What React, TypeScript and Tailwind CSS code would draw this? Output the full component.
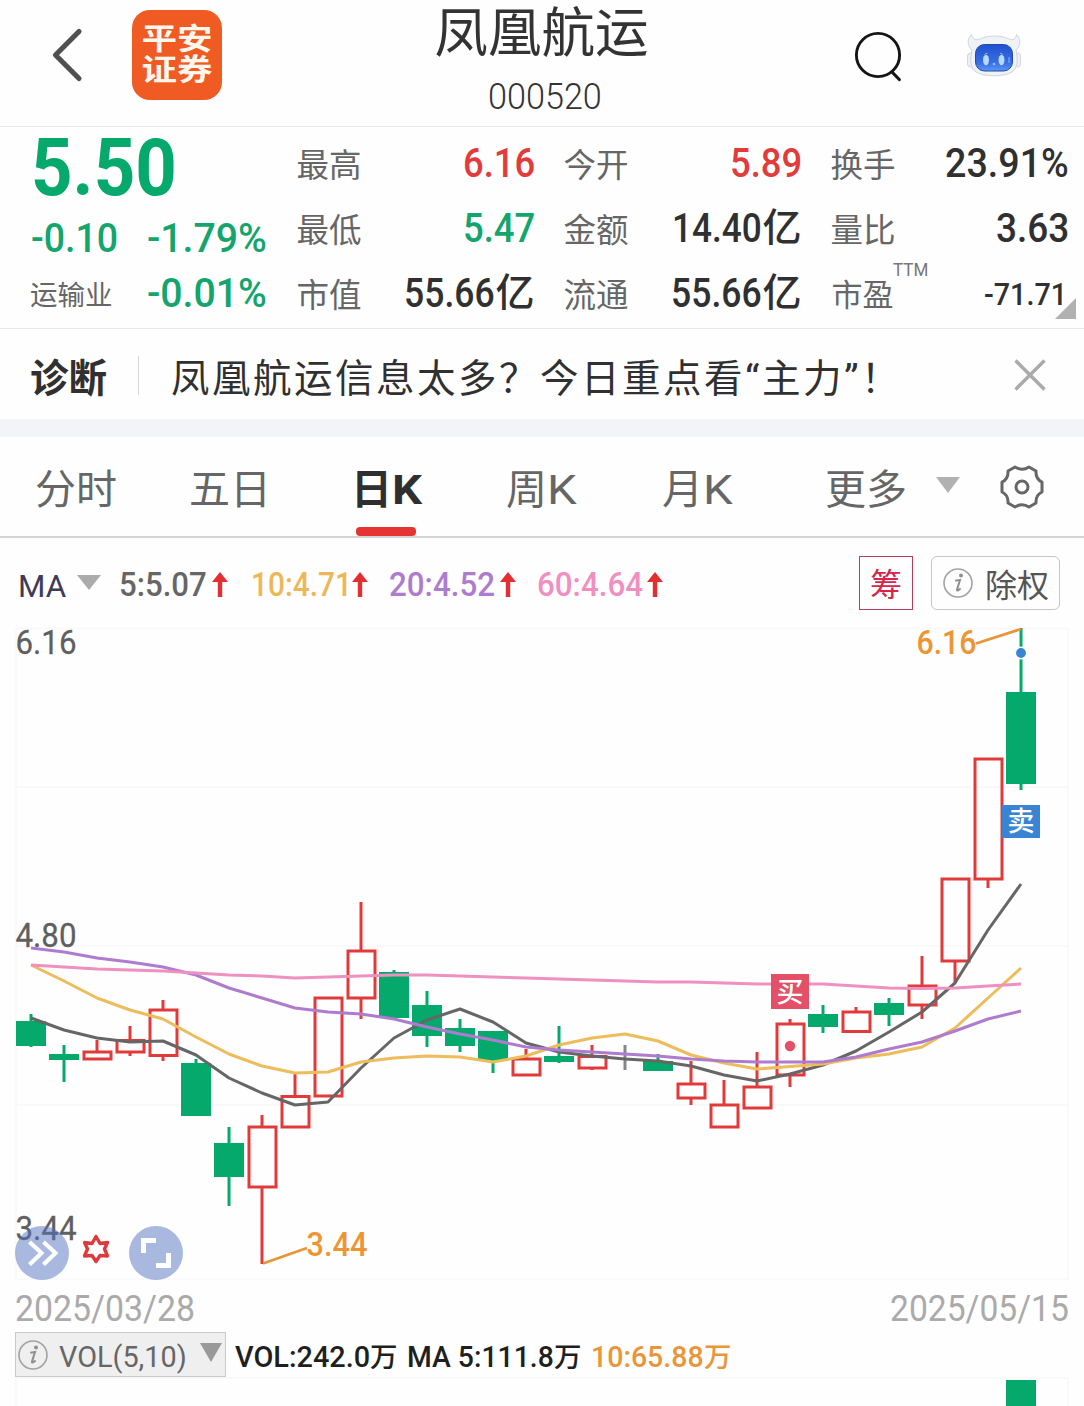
import { useLayoutEffect, useRef, useState } from 'react';
import type { ReactNode } from 'react';
import { clsx } from 'clsx';

interface FitProps {
  w: number;
  className?: string;
  children: ReactNode;
}

// Squeezes a run of latin text into a fixed width, like a narrow DIN face
function Fit({ w, className, children }: FitProps) {
  const ref = useRef<HTMLSpanElement>(null);
  const [scale, setScale] = useState(1);

  useLayoutEffect(() => {
    if (ref.current) {
      setScale(w / ref.current.offsetWidth);
    }
  }, [w, children]);

  return (
    <span className={clsx('inline-block shrink-0 whitespace-nowrap', className)} style={{ width: w }}>
      <span ref={ref} className="inline-block origin-left" style={{ transform: `scaleX(${scale})` }}>
        {children}
      </span>
    </span>
  );
}

type Tone = 'up' | 'down' | 'plain';

interface Stat {
  label: string;
  value: string;
  w: number;
  tone: Tone;
  unit?: string;
}

const toneClass: Record<Tone, string> = {
  up: 'text-[#e33b3b]',
  down: 'text-[#13a56c]',
  plain: 'text-[#303030]',
};

const stats: Stat[] = [
  { label: '最高', value: '6.16', w: 72, tone: 'up' },
  { label: '今开', value: '5.89', w: 72, tone: 'up' },
  { label: '换手', value: '23.91%', w: 124, tone: 'plain' },
  { label: '最低', value: '5.47', w: 72, tone: 'down' },
  { label: '金额', value: '14.40', w: 90, tone: 'plain', unit: '亿' },
  { label: '量比', value: '3.63', w: 73, tone: 'plain' },
  { label: '市值', value: '55.66', w: 91, tone: 'plain', unit: '亿' },
  { label: '流通', value: '55.66', w: 91, tone: 'plain', unit: '亿' },
];

type Candle = [kind: 'r' | 'g' | 'n', high: number, top: number, bottom: number, low: number];

const candles: Candle[] = [
  ['g', 1014, 1021, 1046, 1047],
  ['g', 1045, 1054, 1060, 1082],
  ['r', 1040, 1050.5, 1060.5, 1060],
  ['r', 1026, 1039, 1053.5, 1056],
  ['r', 1000, 1008.5, 1057, 1061],
  ['g', 1059, 1063, 1116, 1116],
  ['g', 1127, 1143, 1177, 1206],
  ['r', 1115, 1125.5, 1188.5, 1264],
  ['r', 1073, 1095, 1128.5, 1128],
  ['r', 997, 996.5, 1097.5, 1097],
  ['r', 902, 949.5, 999.5, 1019],
  ['g', 970, 972, 1018, 1018],
  ['g', 991, 1005, 1036, 1047],
  ['g', 1019, 1028, 1046, 1052],
  ['g', 1031, 1031, 1061, 1073],
  ['r', 1049, 1057.5, 1076.5, 1076],
  ['g', 1026, 1056, 1062, 1063],
  ['r', 1045, 1055, 1069.5, 1070],
  ['n', 1045, 1056, 1058, 1070],
  ['g', 1054, 1061, 1071, 1071],
  ['r', 1061, 1082.5, 1099.5, 1105],
  ['r', 1080, 1103.5, 1128.5, 1128],
  ['r', 1052, 1085.5, 1109.5, 1109],
  ['r', 1019, 1022.5, 1076.5, 1087],
  ['g', 1005, 1014, 1027, 1033],
  ['r', 1007, 1010.5, 1033, 1033],
  ['g', 998, 1003, 1015, 1026],
  ['r', 956, 984.5, 1006.5, 1019],
  ['r', 878, 877.5, 962.5, 982],
  ['r', 758, 757.5, 880.5, 888],
  ['g', 628, 692, 784, 790],
];

const ma5 = [1018, 1030, 1038, 1042, 1041, 1055, 1078, 1093, 1105, 1102, 1068, 1038, 1020, 1009, 1022, 1043, 1052, 1056, 1059, 1061, 1066, 1075, 1081, 1074, 1065, 1051, 1032, 1012, 983, 930, 884];
const ma10 = [965, 981, 998, 1010, 1019, 1037, 1054, 1066, 1073, 1072, 1062, 1058, 1056, 1057, 1062, 1056, 1045, 1038, 1034, 1041, 1055, 1063, 1069, 1066.5, 1064, 1058, 1054, 1047, 1028, 998, 968];
const ma20 = [948, 952, 958, 962, 967, 975, 988, 998, 1008, 1012, 1014, 1019, 1027, 1034, 1040, 1047, 1050, 1052, 1054, 1056, 1059, 1061, 1062, 1062, 1062, 1057, 1049, 1042, 1031, 1019, 1011];
const ma60 = [965, 967, 969, 970, 971, 973, 975, 976, 978, 977, 976, 975, 975, 976, 977, 978, 979, 980, 981, 982, 982, 983, 984, 984, 984, 986, 988, 988.5, 988, 986, 984];

const candleX = (i: number) => 31 + i * 33;
const toPoints = (values: number[]) => values.map((y, i) => `${candleX(i)},${y}`).join(' ');

function InfoIcon({ className }: { className?: string }) {
  return (
    <svg className={clsx('shrink-0', className)} width="30" height="30" viewBox="0 0 30 30" fill="none">
      <circle cx="15" cy="15" r="14" stroke="#a3a3a3" strokeWidth="1.6" />
      <circle cx="18" cy="7.6" r="2" fill="#8f8f8f" />
      <path d="M12.2 12.8L17 12L14 21.6Q13.6 24 17.6 20.6" stroke="#8f8f8f" strokeWidth="2" />
    </svg>
  );
}

function Header() {
  return (
    <header className="flex h-[127px] border-b border-[#e9e9e9]">
      <svg className="ml-12 mt-6 shrink-0" width="40" height="62" viewBox="48 24 40 62" fill="none">
        <path d="M79 31.5L55.5 55L79 78.5" stroke="#505050" strokeWidth="5.2" strokeLinecap="round" strokeLinejoin="round" />
      </svg>
      <div className="ml-11 mt-2.5 flex size-[90px] shrink-0 flex-col items-center justify-center rounded-[18px] bg-[#f05a23] text-[35.5px] font-bold text-[#fff6ec]">
        <span className="block h-[31px] scale-y-[0.84] leading-[31px]">平安</span>
        <span className="block h-[31px] scale-y-[0.84] leading-[31px]">证券</span>
      </div>
      <div className="ml-[171px] flex w-[304px] shrink-0 flex-col items-center">
        <h1 className="mt-[7px] -ml-[7px] text-[53.5px] leading-[54px] text-[#333]">凤凰航运</h1>
        <Fit w={114} className="mt-[18px] text-[36px] leading-9 font-light text-[#333]">000520</Fit>
      </div>
      <svg className="ml-[153px] mt-7 shrink-0" width="56" height="56" viewBox="850 28 56 56" fill="none">
        <circle cx="878" cy="55" r="21.6" stroke="#151515" strokeWidth="2.9" />
        <path d="M892.5 72.5L899.3 79.5" stroke="#151515" strokeWidth="3.2" strokeLinecap="round" />
      </svg>
      <svg className="ml-[58px] mt-[30px] shrink-0" width="60" height="50" viewBox="964 30 60 50">
        <defs>
          <linearGradient id="screen" x1="0" y1="0" x2="0" y2="1">
            <stop offset="0" stopColor="#1f53cf" />
            <stop offset="0.7" stopColor="#3a6ee4" />
            <stop offset="1" stopColor="#5a98f5" />
          </linearGradient>
        </defs>
        <rect x="967.5" y="53" width="7" height="14" rx="3" fill="#efeef2" stroke="#cfccd2" strokeWidth="0.8" />
        <rect x="1013.5" y="53" width="7" height="14" rx="3" fill="#efeef2" stroke="#cfccd2" strokeWidth="0.8" />
        <path
          d="M971.5 34.5C967 39 967 46 972 50C970 58 970 68 976 72C984 77 1004 77 1012 72C1018 68 1018 58 1016 50C1021 46 1021 39 1016.5 34.5C1016 39 1013 41 1009 39C1001 35 988 35 980 39C976 41 972 39 971.5 34.5Z"
          fill="#eff3f8"
          stroke="#cfd5dc"
          strokeWidth="1"
        />
        <rect x="975.5" y="44.5" width="37" height="26.5" rx="9" fill="url(#screen)" stroke="#2348ab" strokeWidth="1" />
        <ellipse cx="986" cy="60" rx="3" ry="5.2" fill="#b5dafc" />
        <ellipse cx="1001.5" cy="60" rx="3" ry="5.2" fill="#b5dafc" />
        <circle cx="994" cy="64" r="1.3" fill="#8fc0fa" />
        <path d="M984.5 54.5L987.5 53M1000 53L1003 54.5M1009 57V63" stroke="#8fb7f5" strokeWidth="1" />
      </svg>
    </header>
  );
}

function Quote() {
  return (
    <section className="flex h-[202px] border-b border-[#e9e9e9]">
      <div className="w-[297.5px] shrink-0 pl-[31px] text-[40.5px] leading-none font-medium text-[#13a56c]">
        <div className="flex h-[80px] items-center">
          <Fit w={146} className="pt-[3px] text-[79px] leading-none font-bold text-[#04a96b]">5.50</Fit>
        </div>
        <div className="flex h-[62px] items-center gap-[29px]">
          <Fit w={87}>-0.10</Fit>
          <Fit w={120}>-1.79%</Fit>
        </div>
        <div className="flex h-[49px] items-center">
          <span className="-ml-px w-[117px] pt-1 text-[27.5px] font-normal text-[#666]">运输业</span>
          <Fit w={120}>-0.01%</Fit>
        </div>
      </div>
      <div className="mt-1 grid h-[195px] w-[771px] grid-cols-3 grid-rows-3 gap-x-[30px] leading-none">
        {stats.map((s) => (
          <div key={s.label} className="flex items-center justify-between">
            <span className="-ml-px pt-[5px] text-[32.5px] text-[#666]">{s.label}</span>
            <span className={clsx('flex items-center text-[41px] font-medium', toneClass[s.tone])}>
              <Fit w={s.w}>{s.value}</Fit>
              {s.unit && <span className="text-[39px]">{s.unit}</span>}
            </span>
          </div>
        ))}
        <div className="relative flex items-center justify-between">
          <span className="pt-1 text-[31px] text-[#666]">市盈</span>
          <Fit w={35} className="absolute left-[61px] top-0 text-[18px] text-[#777]">TTM</Fit>
          <Fit w={83} className="mr-0.5 pt-0.5 text-[31.5px] font-medium text-[#303030]">-71.71</Fit>
          <svg className="absolute -right-[7px] bottom-[7px]" width="21" height="21" viewBox="0 0 21 21">
            <path d="M21 0V21H0Z" fill="#b1b1b1" />
          </svg>
        </div>
      </div>
    </section>
  );
}

function Diagnosis() {
  return (
    <section className="flex h-[90px] items-center pl-[30px] leading-none text-[#303030]">
      <span className="w-[108px] pt-[11px] text-[38.5px] font-bold">诊断</span>
      <span className="mt-[3px] h-[39px] w-px bg-[#d8d8d8]" />
      <span className="flex w-[875px] pt-[11px] pl-[32px] text-[38.5px] tracking-[2.5px]">
        <span>凤凰航运信息太多？今日重点看</span>
        <Fit w={17}>“</Fit>
        <span>主力</span>
        <Fit w={17}>”</Fit>
        <span>！</span>
      </span>
      <svg className="mt-0.5" width="32" height="34" viewBox="0 0 32 34" fill="none">
        <path d="M1.5 2.5L30.5 31.5M30.5 2.5L1.5 31.5" stroke="#aaa" strokeWidth="3.4" />
      </svg>
    </section>
  );
}

function Tabs() {
  return (
    <nav className="flex h-[101px] items-center border-b-2 border-[#d5d5d5] pl-[35px] text-[41px] leading-none text-[#666]">
      <span className="w-[154px] pt-[7px]">分时</span>
      <span className="w-[162px] pt-[7px]">五日</span>
      <span className="relative flex h-full w-[155px] items-center pt-[7px] font-bold text-[#2f2f2f]">
        日<Fit w={30}>K</Fit>
        <span className="absolute bottom-0 left-[5px] h-[9px] w-[60px] rounded-[4px] bg-[#e63434]" />
      </span>
      <span className="flex w-[156px] pt-[7px]">周<Fit w={30}>K</Fit></span>
      <span className="flex w-[163px] pt-[7px]">月<Fit w={30}>K</Fit></span>
      <span className="w-[111px] pt-[7px]">更多</span>
      <svg className="-mt-1" width="24" height="16" viewBox="0 0 24 16">
        <path d="M0 0H24L12 16Z" fill="#b1b1b1" />
      </svg>
      <svg className="ml-[39px]" width="46" height="46" viewBox="-23 -23 46 46" fill="none" stroke="#666" strokeWidth="3">
        <path
          d="M-7 -20Q0 -15.5 7 -20L14 -16Q13.5 -8 20 -5V5Q13.5 8 14 16L7 20Q0 15.5 -7 20L-14 16Q-13.5 8 -20 5V-5Q-13.5 -8 -14 -16Z"
          strokeLinejoin="round"
        />
        <circle r="6" />
      </svg>
    </nav>
  );
}

const averages = [
  { text: '5:5.07', w: 88, gap: 'mr-[23px]', pad: 'pr-[5px]', color: 'text-[#666]' },
  { text: '10:4.71', w: 101, gap: 'mr-[21px]', pad: 'pr-0', color: 'text-[#ecb857]' },
  { text: '20:4.52', w: 106, gap: 'mr-[21px]', pad: 'pr-[5px]', color: 'text-[#ae7ccf]' },
  { text: '60:4.64', w: 106, gap: 'mr-0', pad: 'pr-[4px]', color: 'text-[#f08fc0]' },
];

function MaBar() {
  return (
    <div className="flex h-[90px] items-center pl-[18px] leading-none">
      <Fit w={48} className="pt-1.5 text-[32px] text-[#3f3a57]">MA</Fit>
      <svg className="-mt-0.5 mr-[18px] ml-[11px]" width="24" height="15" viewBox="0 0 24 15">
        <path d="M0 0H24L12 15Z" fill="#ababab" />
      </svg>
      {averages.map((a) => (
        <span key={a.text} className={clsx('flex items-center pt-0.5 text-[34px] font-medium', a.gap, a.color)}>
          <span className={a.pad}><Fit w={a.w}>{a.text}</Fit></span>
          <svg width="16" height="25" viewBox="0 0 16 25">
            <path d="M8 0L16 10H10.2V25H5.8V10H0Z" fill="#e32f2f" />
          </svg>
        </span>
      ))}
      <span className="ml-auto flex h-[54px] w-[54px] items-center justify-center border-[1.5px] border-[#b23e58] pt-1 text-[32px] text-[#d4264a]">
        筹
      </span>
      <span className="ml-[18px] mr-6 flex h-[54px] w-[129px] items-center rounded-md border border-[#c6c6c6] pl-[11px] text-[32px] text-[#555]">
        <InfoIcon className="mr-[12px]" />
        <span className="pt-1.5">除权</span>
      </span>
    </div>
  );
}

function CandleShape({ candle, x }: { candle: Candle; x: number }) {
  const [kind, high, top, bottom, low] = candle;
  if (kind === 'n') {
    return <path d={`M${x} ${high}V${low}`} stroke="#85868c" strokeWidth="3" />;
  }
  if (kind === 'g') {
    return (
      <g fill="#04a96b">
        <rect x={x - 1.5} y={high} width="3" height={low - high} />
        <rect x={x - 15} y={top} width="30" height={bottom - top} />
      </g>
    );
  }
  return (
    <g stroke="#e03a3a" strokeWidth="3" fill="none">
      {high < top && <path d={`M${x} ${high}V${top + 1}`} />}
      {low > bottom && <path d={`M${x} ${bottom - 1}V${low}`} />}
      <rect x={x - 13} y={top + 1.5} width="27" height={bottom - top - 3} />
    </g>
  );
}

function Chart() {
  return (
    <svg className="block overflow-visible" width="1084" height="656" viewBox="0 628 1084 656" fill="none">
      {/* Grid */}
      <g stroke="#f8f8f9" strokeWidth="1.5">
        <rect x="16" y="628.5" width="1052" height="650.5" />
        <path d="M16 787H1068M16 946H1068M16 1105H1068" />
      </g>

      {candles.map((c, i) => (
        <CandleShape key={i} candle={c} x={candleX(i)} />
      ))}

      {/* Price axis */}
      <g className="text-[34px]" fill="#5f5f5f" stroke="#5f5f5f" strokeWidth="0.3">
        <text x="15.5" y="654" textLength="61" lengthAdjust="spacingAndGlyphs">6.16</text>
        <text x="15.5" y="947" textLength="61" lengthAdjust="spacingAndGlyphs">4.80</text>
        <text x="15.5" y="1240" textLength="61" lengthAdjust="spacingAndGlyphs">3.44</text>
      </g>

      {/* Moving averages */}
      <g strokeWidth="3" strokeLinejoin="round">
        <polyline points={toPoints(ma5)} stroke="#666" />
        <polyline points={toPoints(ma10)} stroke="#edbc5b" />
        <polyline points={toPoints(ma20)} stroke="#ae7ccf" />
        <polyline points={toPoints(ma60)} stroke="#ee90c0" />
      </g>

      {/* High and low callouts */}
      <path d="M976 643.5L1021 629M263 1263.5L307 1248" stroke="#ea943a" strokeWidth="2.8" />
      <g className="text-[34px] font-medium" fill="#ee9533">
        <text x="916.5" y="654" textLength="60" lengthAdjust="spacingAndGlyphs">6.16</text>
        <text x="306.5" y="1256" textLength="61" lengthAdjust="spacingAndGlyphs">3.44</text>
      </g>

      {/* Trades */}
      <circle cx="790" cy="1046" r="5.2" fill="#e35068" />
      <circle cx="1021" cy="653" r="5.7" fill="#3a85d3" stroke="#fff" strokeWidth="1.5" />
      <rect x="771" y="974" width="38" height="35" fill="#e35068" />
      <rect x="1002" y="805" width="38" height="33" fill="#3a85d3" />
      <g className="text-[27px] font-medium" fill="#fff" textAnchor="middle">
        <text x="790" y="1001.5">买</text>
        <text x="1021" y="831">卖</text>
      </g>

      {/* Floating buttons */}
      <g fill="#5472bd" fillOpacity="0.5">
        <circle cx="42" cy="1253" r="27" />
        <circle cx="156" cy="1253" r="27" />
      </g>
      <path d="M29.5 1242L41.5 1253L29.5 1264.5M43.5 1242L55.5 1253L43.5 1264.5" stroke="#fff" strokeWidth="4.2" />
      <path d="M143.5 1253V1240.5H156M168.5 1253V1265.5H156" stroke="#fff" strokeWidth="5" />
      <path
        d="M96 1236.5L100 1243.5L107.5 1242.5L104.5 1249L107.5 1256L100 1255.5L96 1261.5L92 1255.5L84.500 1256L87.5 1249L84.5 1242.5L92 1243.5Z"
        stroke="#dd3a3e"
        strokeWidth="3.4"
        strokeLinejoin="round"
      />
    </svg>
  );
}

function Volume() {
  return (
    <section className="leading-none">
      <div className="flex h-[48px] items-center justify-between pl-[15px] pr-[15px] text-[37px] text-[#aaa]">
        <Fit w={180}>2025/03/28</Fit>
        <Fit w={179}>2025/05/15</Fit>
      </div>
      <div className="flex h-[45px] items-center pl-[15px] text-[29.5px] font-medium text-[#1f1f1f]">
        <span className="flex h-[45px] w-[211px] shrink-0 items-center border border-[#c9c9c9] bg-[#efefef] pl-[2px] font-normal text-[#666]">
          <InfoIcon />
          <Fit w={128} className="ml-[11px] mr-[13px] pt-1.5">VOL(5,10)</Fit>
          <svg className="-mt-1" width="22" height="19" viewBox="0 0 22 19">
            <path d="M0 0H22L11 19Z" fill="#999" />
          </svg>
        </span>
        <span className="flex items-center pt-1.5 pl-[9px]">
          <Fit w={135}>VOL:242.0</Fit>
          <span className="w-[37px] text-[27.5px]">万</span>
          <Fit w={147}>MA 5:111.8</Fit>
          <span className="w-[37px] text-[27.5px]">万</span>
        </span>
        <span className="flex items-center pt-1.5 text-[#e9963b]">
          <Fit w={113}>10:65.88</Fit>
          <span className="text-[27.5px]">万</span>
        </span>
      </div>
      <svg className="block" width="1084" height="29" viewBox="0 1377 1084 29" fill="none">
        <path d="M16 1406V1378H1068V1406" stroke="#f8f8f9" strokeWidth="1.5" />
        <rect x="1006" y="1380" width="30" height="26" fill="#04a96b" />
      </svg>
    </section>
  );
}

export default function App() {
  return (
    <div className="h-[1406px] w-[1084px] overflow-hidden bg-[#fefefe] font-['Roboto','Noto_Sans_CJK_SC',sans-serif]">
      <Header />
      <Quote />
      <Diagnosis />
      <div className="h-[18px] bg-[#f3f4f8]" />
      <Tabs />
      <MaBar />
      <Chart />
      <Volume />
    </div>
  );
}
